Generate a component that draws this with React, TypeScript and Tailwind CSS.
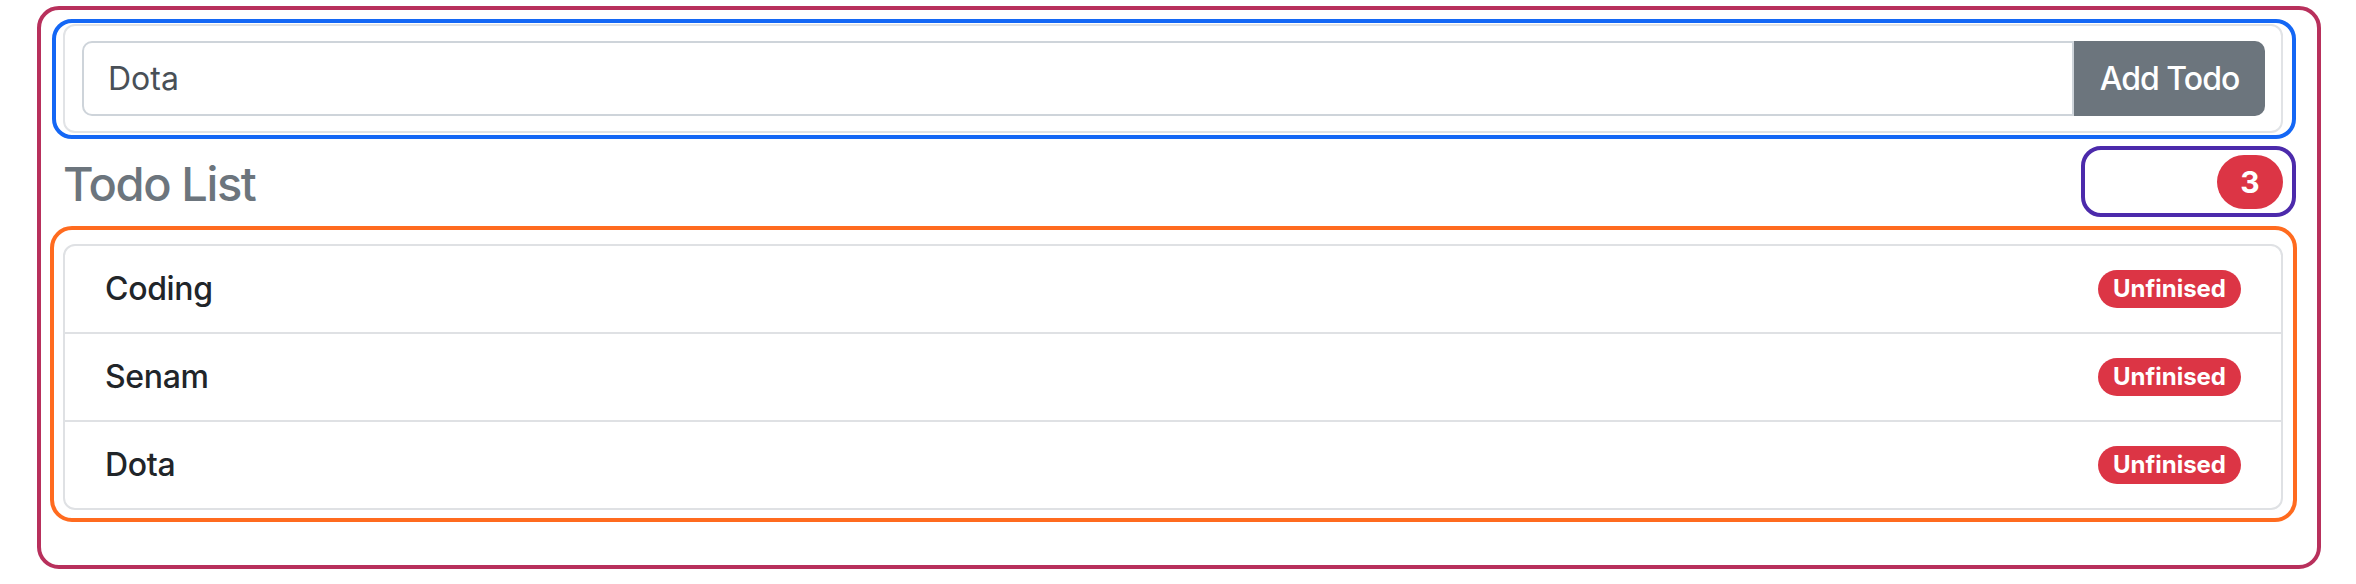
import React from 'react';

const todos = [
  { id: 1, title: 'Coding', done: false },
  { id: 2, title: 'Senam', done: false },
  { id: 3, title: 'Dota', done: false },
];

const TodoItem: React.FC<{ title: string; last: boolean }> = ({ title, last }) => (
  <li
    className={`flex items-center justify-between px-[40px] ${
      last ? 'h-[86px]' : 'h-[88px] border-b-2 border-[#dfe1e4]'
    }`}
  >
    <span className="text-[32px] font-medium tracking-[-0.01em] text-[#212529]">{title}</span>
    <span className="flex h-[38px] items-center rounded-full bg-[#dc3545] px-[15px] text-[24px] font-bold leading-none text-white">
      Unfinised
    </span>
  </li>
);

export default function App() {
  return (
    <div className="min-h-[584px] bg-white pl-[37px] pr-[35px] pt-[6px] font-['Inter','Liberation_Sans',sans-serif]">
      <div className="rounded-[22px] border-4 border-[#b8305c] pb-[43px] pl-[9px] pr-[20px] pt-[9px]">
        {/* form */}
        <div className="ml-[2px] mr-[1px] rounded-[20px] border-4 border-[#1467f5] pb-[2px] pl-[7px] pr-[9px] pt-[1px]">
          <div className="rounded-[12px] border-2 border-[#e1e3e6] pb-[15px] pl-[17px] pr-[16px] pt-[15px]">
            <div className="flex h-[75px]">
              <input
                readOnly
                defaultValue="Dota"
                className="min-w-0 flex-1 rounded-l-[10px] border-2 border-[#ced4da] px-[24px] text-[32px] text-[#495057] outline-none"
              />
              <button className="w-[191px] rounded-r-[10px] bg-[#6c757d] text-[32px] font-medium tracking-[-0.03em] text-white">
                Add Todo
              </button>
            </div>
          </div>
        </div>

        {/* header */}
        <div className="mt-[7px] flex items-center justify-between">
          <h4 className="ml-[13px] mt-[5px] text-[47px] font-medium leading-[1.2] tracking-[-0.03em] text-[#6c757d]">
            Todo List
          </h4>
          <div className="mr-[1px] flex h-[71px] w-[215px] items-center justify-end rounded-[20px] border-4 border-[#4c2aab] pr-[9px]">
            <span className="flex h-[54px] w-[66px] items-center justify-center rounded-full bg-[#dc3545] text-[30px] font-bold leading-none text-white">
              {todos.length}
            </span>
          </div>
        </div>

        {/* list */}
        <div className="mt-[9px] rounded-[22px] border-4 border-[#ff6b1f] pb-[8px] pl-[9px] pr-[10px] pt-[14px]">
          <ul className="rounded-[12px] border-2 border-[#dfe1e4]">
            {todos.map((todo, i) => (
              <TodoItem key={todo.id} title={todo.title} last={i === todos.length - 1} />
            ))}
          </ul>
        </div>
      </div>
    </div>
  );
}
